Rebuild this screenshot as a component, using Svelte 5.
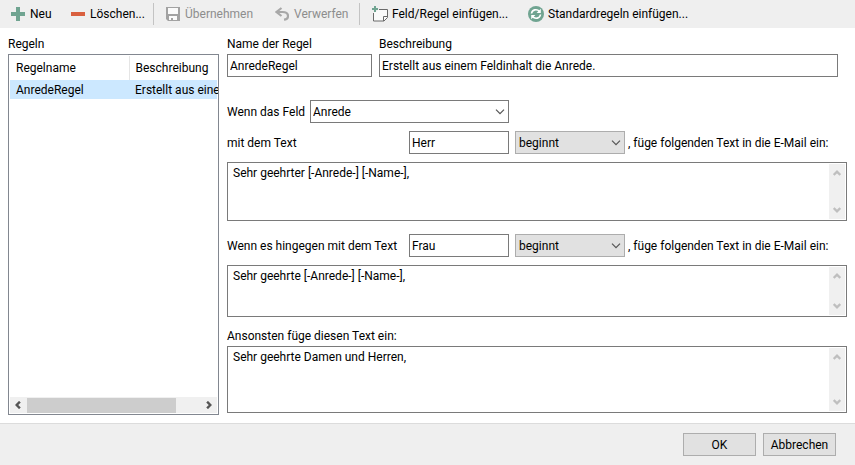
<script>
  let rule = $state('AnredeRegel');
  let description = $state('Erstellt aus einem Feldinhalt die Anrede.');
  let field = $state('Anrede');
  let first = $state({ match: 'Herr', mode: 'beginnt', text: 'Sehr geehrter [-Anrede-] [-Name-],' });
  let second = $state({ match: 'Frau', mode: 'beginnt', text: 'Sehr geehrte [-Anrede-] [-Name-],' });
  let fallback = $state('Sehr geehrte Damen und Herren,');
</script>

{#snippet chevron(dir)}
  <svg class="chev {dir}" width="8" height="6" viewBox="0 0 8 6" aria-hidden="true">
    <path d="M0.700 4.900 4 1.700 7.300 4.900" />
  </svg>
{/snippet}

{#snippet scroller()}
  <div class="vscroll">
    {@render chevron('up')}
    {@render chevron('down')}
  </div>
{/snippet}

{#snippet dropArrow()}
  <svg class="arrow" width="10" height="6" viewBox="0 0 10 6" aria-hidden="true">
    <path d="M1 0.700 5 4.700 9 0.700" />
  </svg>
{/snippet}

<div class="dialog">
  <div class="toolbar" role="toolbar" aria-label="Regeln">
    <button class="tool new">
      <svg width="14" height="14" viewBox="0 0 14 14"><path d="M5 0h4v5h5v4H9v5H5V9H0V5h5z" fill="#70a491" /></svg>
      Neu
    </button>
    <button class="tool delete">
      <svg width="14" height="14" viewBox="0 0 14 14"><path d="M0 5h14v4H0z" fill="#d9603f" /></svg>
      Löschen...
    </button>
    <span class="sep"></span>
    <button class="tool save" disabled>
      <svg width="14" height="14" viewBox="0 0 14 14"><path fill-rule="evenodd" d="M0 0h14v14H2L0 12zM2 1v6h10V1zM3 9v4h2v-2h2v2h4V9z" fill="#a2a2a2" /><path d="M2 1h10v6H2zM3 9h8v4H7v-2H5v2H3z" fill="#fafafa" /></svg>
      Übernehmen
    </button>
    <button class="tool undo" disabled>
      <svg width="14" height="14" viewBox="0 0 14 14"><path d="M6.500 1 1.500 5l5 4M2 5h5.500C12 5 13 7 13 9s-1.500 3.500-4 3.700" fill="none" stroke="#a8a8a8" stroke-width="2.200" /></svg>
      Verwerfen
    </button>
    <span class="sep"></span>
    <button class="tool insert">
      <svg width="16" height="16" viewBox="0 0 16 16"><path d="M7 3.500h8.500v8l-3.500 3.500H1.500V7" fill="#fafafa" stroke="#6a6a6a" /><path d="M15.500 10.500H11.500v4.500" fill="none" stroke="#6a6a6a" /><path d="M2 0h2v2h2v2H4v2H2V4H0V2h2z" fill="#70a491" /></svg>
      Feld/Regel einfügen...
    </button>
    <button class="tool standard">
      <svg width="16" height="16" viewBox="0 0 16 16"><circle cx="8" cy="8" r="8" fill="#70a491" /><path d="M3.500 7.500C4 3.500 9 2.500 11.500 5.500M12.500 8.500C12 12.500 7 13.500 4.500 10.500" fill="none" stroke="#fff" stroke-width="1.600" /><path d="M12.800 2.800v4.200H8.600zM3.200 13.200V9h4.200z" fill="#fff" /></svg>
      Standardregeln einfügen...
    </button>
  </div>

  <main>
    <section class="rules">
      <h2>Regeln</h2>
      <div class="list">
        <table>
          <thead><tr><th>Regelname</th><th>Beschreibung</th></tr></thead>
          <tbody><tr><td>AnredeRegel</td><td>Erstellt aus eine</td></tr></tbody>
        </table>
        <div class="hscroll">
          {@render chevron('left')}
          <div class="track"><div class="thumb"></div></div>
          {@render chevron('right')}
        </div>
      </div>
    </section>

    <section class="editor">
      <div class="head">
        <div class="name">
          <label for="rule-name">Name der Regel</label>
          <input id="rule-name" bind:value={rule} />
        </div>
        <div class="desc">
          <label for="rule-desc">Beschreibung</label>
          <input id="rule-desc" bind:value={description} />
        </div>
      </div>

      <div class="row field-row">
        <label for="field">Wenn das Feld</label>
        <div class="select wide">
          <select id="field" bind:value={field}><option>Anrede</option></select>
          {@render dropArrow()}
        </div>
      </div>

      <div class="row">
        <label class="cond" for="match-1">mit dem Text</label>
        <input id="match-1" class="match" bind:value={first.match} />
        <div class="select grey">
          <select id="mode-1" aria-label="Vergleich" bind:value={first.mode}><option>beginnt</option></select>
          {@render dropArrow()}
        </div>
        <label class="tail" for="text-1">, füge folgenden Text in die E-Mail ein:</label>
      </div>
      <div class="area one">
        <textarea id="text-1" bind:value={first.text}></textarea>
        {@render scroller()}
      </div>

      <div class="row">
        <label class="cond" for="match-2">Wenn es hingegen mit dem Text</label>
        <input id="match-2" class="match" bind:value={second.match} />
        <div class="select grey">
          <select id="mode-2" aria-label="Vergleich" bind:value={second.mode}><option>beginnt</option></select>
          {@render dropArrow()}
        </div>
        <label class="tail" for="text-2">, füge folgenden Text in die E-Mail ein:</label>
      </div>
      <div class="area two">
        <textarea id="text-2" bind:value={second.text}></textarea>
        {@render scroller()}
      </div>

      <label class="otherwise" for="text-3">Ansonsten füge diesen Text ein:</label>
      <div class="area three">
        <textarea id="text-3" bind:value={fallback}></textarea>
        {@render scroller()}
      </div>
    </section>
  </main>

  <footer>
    <button>OK</button>
    <button>Abbrechen</button>
  </footer>
</div>

<style>
  :global(body) { margin: 0; background: #fff; }
  .dialog {
    display: flex;
    flex-direction: column;
    min-height: 100vh;
    font: 12px/16px "Segoe UI", Roboto, "Noto Sans", sans-serif;
    color: #000;
  }
  .dialog *, .dialog { box-sizing: border-box; }
  button, input, select, textarea { font: inherit; color: inherit; border-radius: 0; margin: 0; }
  svg { flex: none; display: block; }

  .toolbar { display: flex; align-items: center; height: 28px; background: #efefef; padding-left: 11px; }
  .tool {
    display: flex; align-items: center; gap: 5px;
    border: 0; padding: 0; background: none; white-space: nowrap;
  }
  .tool:disabled { color: #8d8d8d; }
  .new { width: 60px; }
  .delete { width: 82px; }
  .save { width: 109px; }
  .undo { width: 84px; }
  .insert { width: 156px; gap: 4px; }
  .standard { gap: 4px; }
  .sep { width: 1px; height: 22px; background: #c3c3c3; margin-right: 12px; }

  main { flex: 1; display: flex; gap: 8px; padding: 8px; }
  h2 { margin: 0; font: inherit; }
  .rules { display: flex; flex-direction: column; width: 211px; gap: 2px; }
  .list {
    flex: 1; display: flex; flex-direction: column; justify-content: space-between;
    border: 1px solid #828790; padding: 1px; overflow: hidden;
  }
  table { width: 100%; table-layout: fixed; border-collapse: collapse; }
  th, td { padding: 0 0 0 6px; font-weight: 400; text-align: left; white-space: nowrap; }
  th { height: 24px; }
  td { height: 19px; }
  th:first-child { width: 119px; border-right: 1px solid #e5e5e5; }
  tbody tr { background: #cce8ff; }
  .hscroll { display: flex; align-items: center; height: 16px; padding: 0 4px; background: #f0f0f0; }
  .track { flex: 1; margin: 0 5px; }
  .thumb { width: 86%; height: 15px; background: #cdcdcd; }
  .chev path { fill: none; stroke: #bfbfbf; stroke-width: 2.4; }
  .hscroll .chev path { stroke: #555; }
  .down { transform: rotate(180deg); }
  .left { transform: rotate(-90deg); }
  .right { transform: rotate(90deg); }

  .editor { flex: 1; min-width: 0; display: flex; flex-direction: column; }
  .head { display: flex; gap: 7px; padding-right: 9px; margin-bottom: 23px; }
  .head > div { display: flex; flex-direction: column; gap: 2px; }
  .name { width: 145px; }
  .desc { flex: 1; }
  input, select { height: 23px; width: 100%; border: 1px solid #7a7a7a; background: #fff; padding: 0 2px; outline: 0; }
  .row { display: flex; align-items: center; height: 23px; white-space: nowrap; margin-bottom: 8px; }
  .field-row label { width: 83px; }
  .cond { width: 182px; }
  .row .match { width: 100px; margin-right: 6px; }
  .select { position: relative; width: 110px; }
  .select.wide { width: 199px; }
  select { appearance: none; display: block; }
  .grey select { background: #e1e1e1; border-color: #adadad; padding-left: 3px; }
  .arrow { position: absolute; right: 4px; top: 9px; pointer-events: none; }
  .arrow path { fill: none; stroke: #555; stroke-width: 1.2; }
  .tail { margin-left: 3px; }
  .area { display: flex; border: 1px solid #7a7a7a; padding: 1px; }
  textarea { flex: 1; min-width: 0; height: 100%; border: 0; padding: 1px 4px; resize: none; outline: 0; overflow: hidden; background: #fff; }
  .vscroll { display: flex; flex-direction: column; align-items: center; justify-content: space-between; width: 16px; padding: 6px 0; background: #f0f0f0; }
  .one { height: 59px; margin-bottom: 13px; }
  .two { height: 52px; margin-bottom: 11px; }
  .otherwise { margin-bottom: 2px; }
  .three { flex: 1; min-height: 67px; margin-bottom: 2px; }

  footer { display: flex; justify-content: flex-end; gap: 7px; padding: 9px 19px; background: #efefef; border-top: 1px solid #dcdcdc; }
  footer button { width: 73px; height: 23px; padding: 0; border: 1px solid #adadad; background: #e1e1e1; }
</style>
